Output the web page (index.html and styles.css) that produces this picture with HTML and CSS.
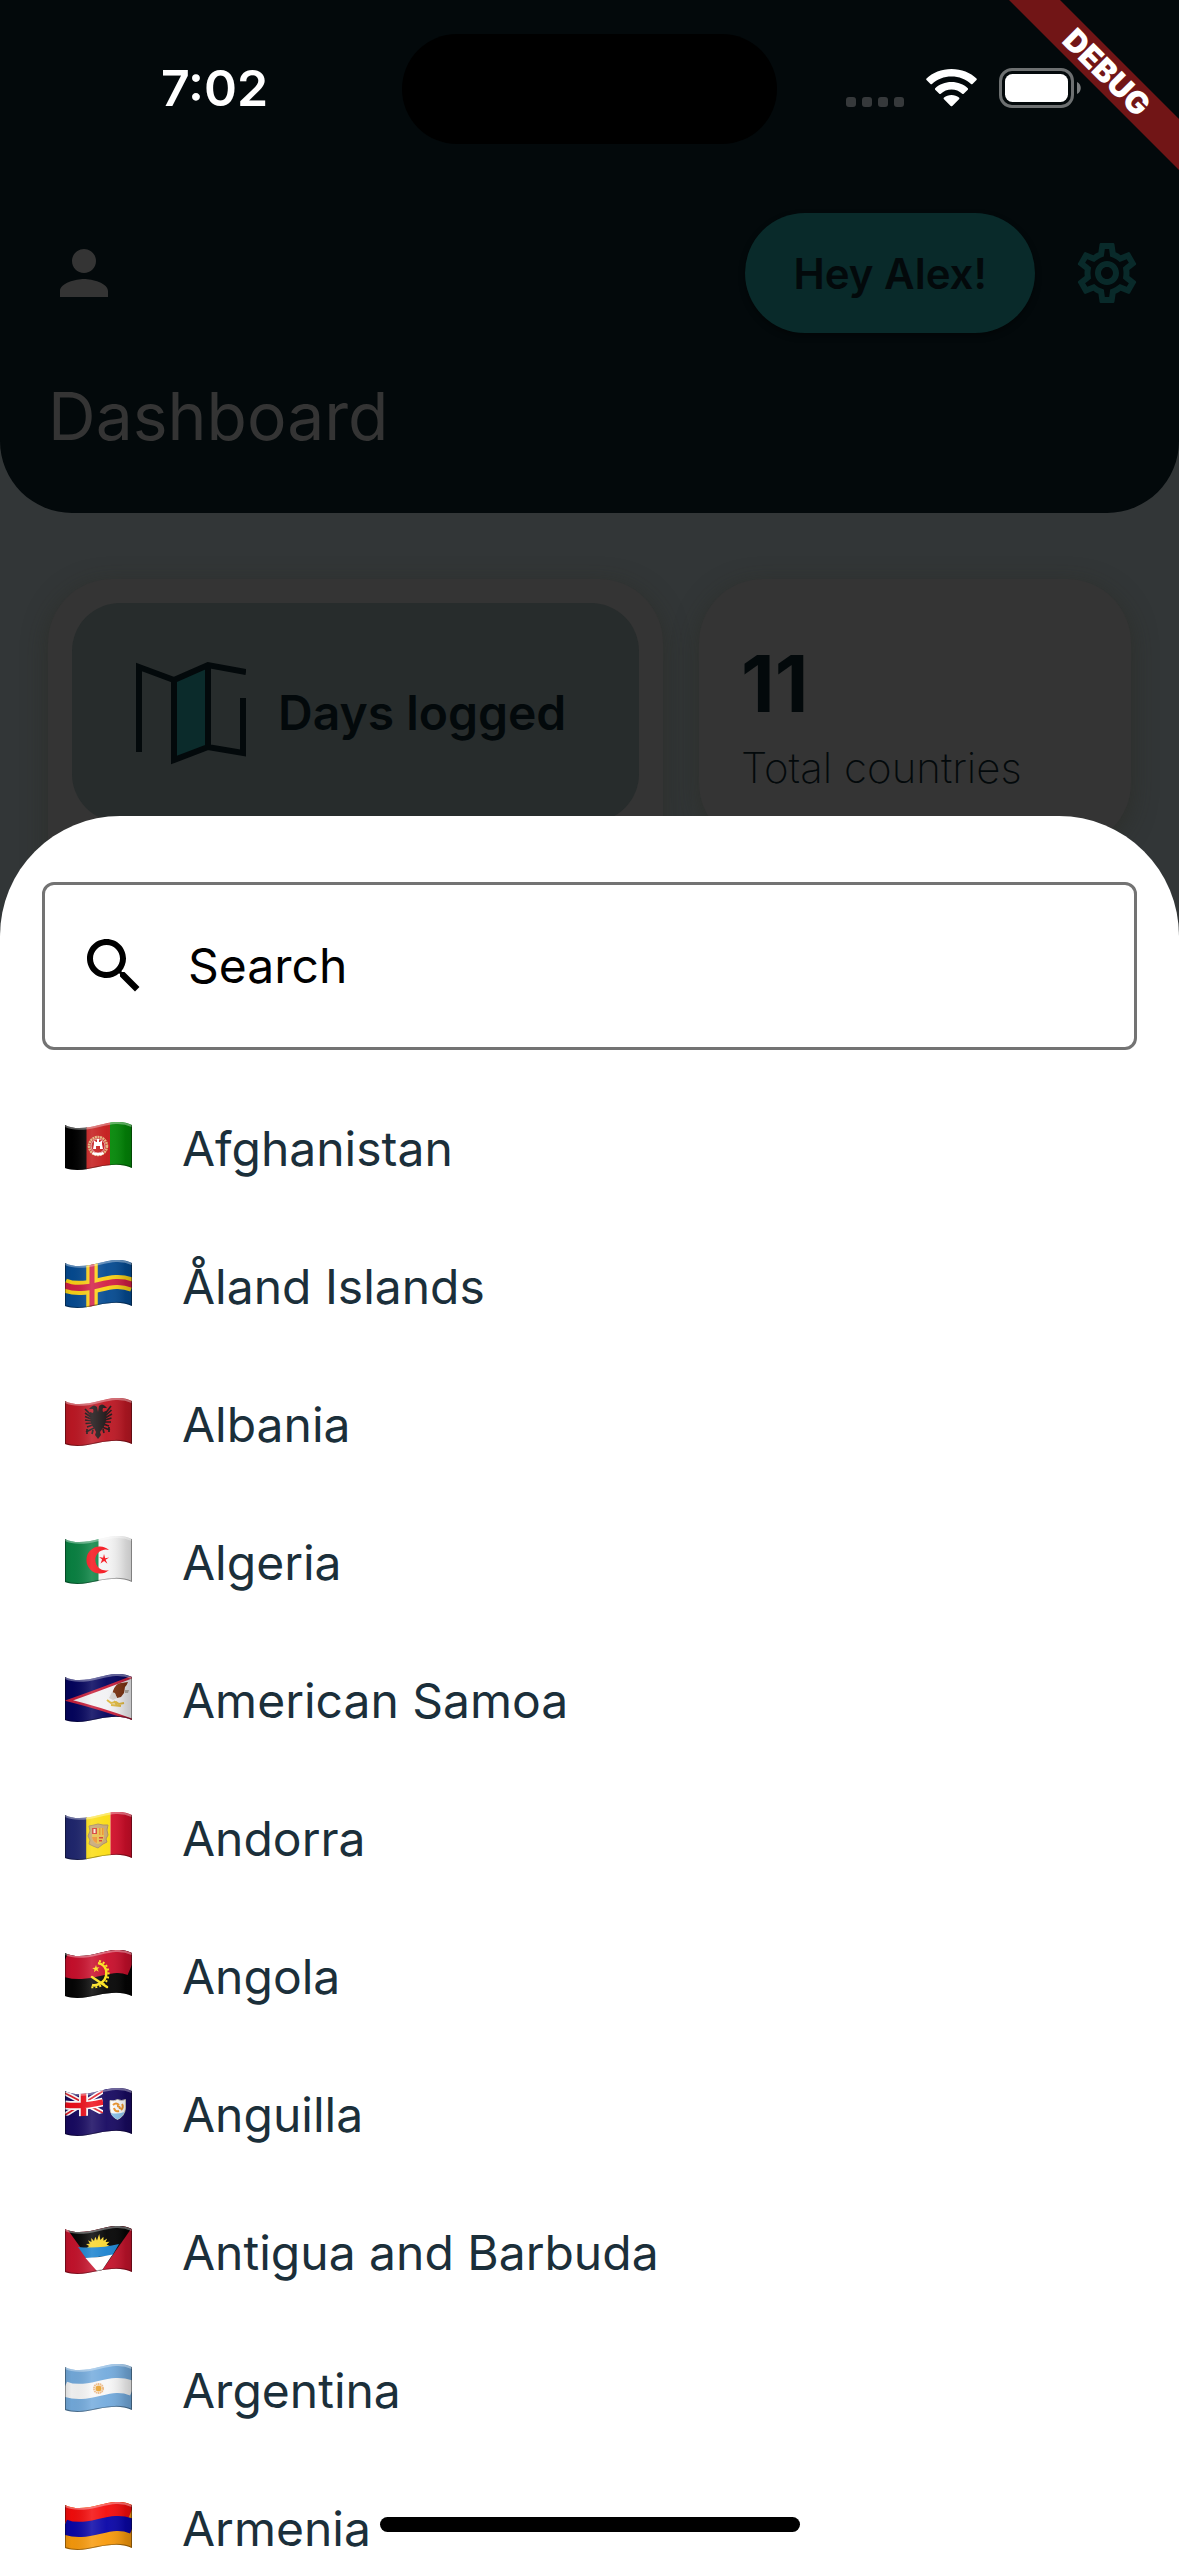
FILE: index.html
```html
<!DOCTYPE html>
<html lang="en">
<head>
<meta charset="utf-8">
<meta name="viewport" content="width=device-width, initial-scale=1">
<title>Dashboard</title>
<link rel="stylesheet" href="styles.css">
</head>
<body>
<svg class="defs" aria-hidden="true">
  <defs>
    <clipPath id="cloth"><path d="M0 3C10 8 22 6 34 3S56-2 67 3V46C56 41 44 43 33 45S12 50 0 46Z"/></clipPath>
    <path id="wave" d="M-1 0C10 5 22 3 34 0S56-5 68 0"/>
    <linearGradient id="fold">
      <stop offset="0" stop-color="#000" stop-opacity=".12"/>
      <stop offset=".1" stop-color="#000" stop-opacity=".04"/>
      <stop offset=".4" stop-color="#fff" stop-opacity=".14"/>
      <stop offset=".62" stop-color="#fff" stop-opacity=".04"/>
      <stop offset=".9" stop-color="#000" stop-opacity=".14"/>
      <stop offset="1" stop-color="#000" stop-opacity=".2"/>
    </linearGradient>
    <g id="shade">
      <rect width="67" height="49" fill="url(#fold)"/>
      <path d="M0 4C10 9 22 7 34 4S56-1 67 4" fill="none" stroke="#fff" stroke-opacity=".35" stroke-width="2"/>
      <path d="M67 3V46C56 41 44 43 33 45S12 50 0 46V3" fill="none" stroke="#000" stroke-opacity=".35" stroke-width="2"/>
    </g>
  </defs>
</svg>

<div class="app">
  <header class="header">
    <div class="status">
      <time class="clock">7:02</time>
      <div class="island"></div>
      <div class="indicators">
        <svg width="58" height="38" viewBox="0 0 58 38" fill="#36393b" aria-hidden="true"><rect y="28" width="10" height="10" rx="3"/><rect x="16" y="28" width="10" height="10" rx="3"/><rect x="32" y="28" width="10" height="10" rx="3"/><rect x="48" y="28" width="10" height="10" rx="3"/></svg>
        <svg width="51" height="38" viewBox="0 0 51 38" aria-hidden="true"><path fill="#fff" d="M25.500 0C35.500 0 44.500 3.700 50.500 9.500Q51.200 10.300 50.500 11L46.500 15Q45.800 15.600 45 15C39.800 10.200 33 7.600 25.500 7.600S11.200 10.200 6 15Q5.200 15.600 4.500 15L.5 11Q-.2 10.300.5 9.500C6.500 3.700 15.500 0 25.500 0ZM25.500 13C31.900 13 37.600 15.300 41.800 19.200Q42.500 20 41.800 20.700L37.700 24.700Q37 25.300 36.200 24.700C33.300 22.200 29.600 20.600 25.500 20.600S17.700 22.200 14.800 24.700Q14 25.300 13.300 24.700L9.200 20.700Q8.500 20 9.200 19.200C13.400 15.300 19.100 13 25.500 13ZM25.500 26C28.400 26 31 26.900 33 28.600Q33.800 29.400 33 30.200L26.300 37Q25.500 37.700 24.700 37L18 30.200Q17.200 29.400 18 28.600C20 26.900 22.600 26 25.500 26Z"/></svg>
        <svg width="82" height="40" viewBox="0 0 82 40" aria-hidden="true"><rect x="1.500" y="1.500" width="72" height="37" rx="11.500" fill="none" stroke="#6d7071" stroke-width="3"/><rect x="6" y="6" width="63" height="28" rx="7.500" fill="#fff"/><path d="M78 14V26C83 24 83 16 78 14Z" fill="#7b7e7f"/></svg>
      </div>
    </div>
    <div class="toolbar">
      <button class="icon-button" aria-label="Profile"><svg viewBox="0 0 24 24"><path fill="#343434" d="M12 12c2.210 0 4-1.790 4-4s-1.790-4-4-4-4 1.790-4 4 1.790 4 4 4zm0 2c-2.670 0-8 1.340-8 4v2h16v-2c0-2.660-5.330-4-8-4z"/></svg></button>
      <button class="greeting">Hey Alex!</button>
      <button class="icon-button" aria-label="Settings"><svg viewBox="0 0 24 24"><path fill="#092a2a" d="M19.430 12.980c.04-.32.070-.64.070-.98 0-.34-.03-.66-.07-.98l2.110-1.650c.19-.15.240-.42.120-.64l-2-3.460c-.09-.16-.26-.25-.44-.25-.06 0-.12.010-.17.030l-2.490 1c-.52-.4-1.080-.73-1.690-.98l-.38-2.650C14.460 2.180 14.250 2 14 2h-4c-.25 0-.46.180-.49.420l-.38 2.650c-.61.250-1.170.590-1.690.980l-2.490-1c-.06-.02-.12-.03-.18-.03-.17 0-.34.090-.43.250l-2 3.460c-.13.220-.07.490.120.640l2.110 1.650c-.04.320-.07.650-.07.980 0 .33.030.66.070.98l-2.110 1.650c-.19.150-.24.420-.12.640l2 3.460c.09.160.26.250.44.250.06 0 .12-.01.170-.03l2.490-1c.52.400 1.080.730 1.690.980l.38 2.650c.03.240.24.420.49.420h4c.25 0 .46-.18.490-.42l.38-2.650c.61-.25 1.170-.59 1.690-.98l2.490 1c.06.020.12.030.18.030.17 0 .34-.09.430-.25l2-3.460c.12-.22.070-.49-.12-.64l-2.110-1.650zm-1.980-1.710c.04.310.05.520.05.730 0 .21-.02.430-.05.730l-.14 1.130.89.700 1.080.840-.7 1.210-1.270-.51-1.040-.42-.9.680c-.43.320-.84.560-1.250.730l-1.060.430-.16 1.130-.2 1.350h-1.400l-.19-1.350-.16-1.130-1.060-.43c-.43-.18-.83-.41-1.230-.71l-.91-.7-1.060.430-1.270.510-.7-1.210 1.080-.84.890-.7-.14-1.130c-.03-.31-.05-.54-.05-.74s.02-.43.050-.73l.14-1.130-.89-.7-1.080-.84.700-1.210 1.270.510 1.040.420.900-.68c.43-.32.840-.56 1.250-.73l1.060-.43.160-1.130.2-1.350h1.390l.19 1.350.16 1.130 1.060.430c.43.180.83.410 1.230.710l.91.700 1.060-.43 1.270-.51.700 1.210-1.070.85-.89.700.14 1.130zM12 8c-2.210 0-4 1.790-4 4s1.790 4 4 4 4-1.790 4-4-1.790-4-4-4zm0 6c-1.100 0-2-.9-2-2s.9-2 2-2 2 .9 2 2-.9 2-2 2z"/></svg></button>
    </div>
    <h1 class="title">Dashboard</h1>
  </header>

  <main class="cards">
    <section class="card card-days">
      <div class="days">
        <svg width="110" height="106" viewBox="0 0 110 106" aria-hidden="true"><path fill="#0b2b2b" d="M38 20 72 5V86L38 100Z"/><path fill="none" stroke="#03090b" stroke-width="6" d="M3 92V7L38 20 72 5 110 12M38 20V100L72 87 107 93V38M72 5V87"/></svg>
        <span>Days logged</span>
      </div>
    </section>
    <section class="card card-total">
      <strong class="total">11</strong>
      <span class="total-label">Total countries</span>
    </section>
  </main>
</div>

<div class="ribbon"><span>DEBUG</span></div>

<div class="sheet" role="dialog" aria-label="Choose a country">
  <label class="search">
    <svg viewBox="0 0 24 24" aria-hidden="true"><path d="M15.500 14h-.79l-.28-.27C15.410 12.590 16 11.110 16 9.500 16 5.910 13.090 3 9.500 3S3 5.910 3 9.500 5.910 16 9.500 16c1.610 0 3.090-.59 4.230-1.570l.27.280v.79l5 4.990L20.490 19l-4.990-5zm-6 0C7.010 14 5 11.990 5 9.500S7.010 5 9.500 5 14 7.010 14 9.500 11.990 14 9.500 14z"/></svg>
    <input type="text" placeholder="Search" aria-label="Search">
  </label>
  <ul class="countries">
    <li><button class="country">
      <svg class="flag" viewBox="0 0 67 49"><g clip-path="url(#cloth)"><path fill="#000" d="M0 0H22V49H0z"/><path fill="#c41a1a" d="M21.500 0H45V49H21.500z"/><path fill="#048a08" d="M45 0H67V49H45z"/><circle cx="33" cy="24" r="9" fill="none" stroke="#e3b27a" stroke-width="2.500" stroke-dasharray="2 .6"/><circle cx="33" cy="24" r="7" fill="none" stroke="#fff" stroke-opacity=".6"/><path fill="#fff" d="M29 22V19h1.500v1H32v-3h2v3h1.500v-1H37v3l1 5H28zM27 32q6 3 12 0l-1-2q-5 2-10 0z"/><path fill="#c41a1a" d="M31 24h4v3h-4z"/><use href="#shade"/></g></svg>
      <span>Afghanistan</span></button></li>
    <li><button class="country">
      <svg class="flag" viewBox="0 0 67 49"><g clip-path="url(#cloth)"><path fill="#054b92" d="M0 0H67V49H0z"/><g fill="none"><use href="#wave" y="25" stroke="#fbd116" stroke-width="14"/><path stroke="#fbd116" stroke-width="11.500" d="M27 0V49"/><use href="#wave" y="25" stroke="#d21f45" stroke-width="6"/><path stroke="#d21f45" stroke-width="5" d="M27 0V49"/></g><use href="#shade"/></g></svg>
      <span>Åland Islands</span></button></li>
    <li><button class="country">
      <svg class="flag" viewBox="0 0 67 49"><g clip-path="url(#cloth)"><path fill="#be1824" d="M0 0H67V49H0z"/><path fill="#1d1516" d="M33 14 32 9Q29 6 26 9L24 11 28 11Q29 13 28 15L25 14Q25 27 29 30L31 34 30 37 33 41 36 37 35 34 38 30Q42 26 41 13L38 14Q37 12 38 10L42 10 40 8Q37 5 34 8Z"/><path fill="none" stroke="#1d1516" stroke-width="1.700" d="M26 17 20 11M26 19 20 15M26 21 20 18.500M27 23 20 22M27 25 20.500 25.500M28 27 22 29M40 16 46 8M40 18 46.500 12M40 20 47 16M40 22 46.500 20M39 24 46 24M38 26 44 28M29 30 21 34M22 31V36M37 29 45 32M44 29V34M28 32 27 36M38 31 39 35"/><use href="#shade"/></g></svg>
      <span>Albania</span></button></li>
    <li><button class="country">
      <svg class="flag" viewBox="0 0 67 49"><g clip-path="url(#cloth)"><path fill="#0a8343" d="M0 0H34V49H0z"/><path fill="#f4f4f4" d="M33.500 0H67V49H33.500z"/><path fill="#f5141c" d="M44 14A13.500 13.500 0 1 0 44 34 10.500 10.500 0 1 1 44 14Z"/><path fill="#f5141c" d="M39 18l1.200 4.200 4-.7-3.600 2.300 1.800 4-3.300-2.700-3.600 2.500 1.600-4-3-2.500 4 .6z"/><use href="#shade"/></g></svg>
      <span>Algeria</span></button></li>
    <li><button class="country">
      <svg class="flag" viewBox="0 0 67 49"><g clip-path="url(#cloth)"><path fill="#04045e" d="M0 0H67V49H0z"/><path fill="#f2f2f4" stroke="#c8203c" stroke-width="2.500" d="M4 26.500Q34 16 70 2V47Q38 35 4 26.500Z"/><path fill="#7b3210" d="M48 17q3-8 8-8l7-1q-1 3-3 5l-1 6-3 4-4 1-2-4-3 2z"/><path fill="#b9b2a8" d="M60 16h4l-1 3h-3z"/><path fill="#d9d5d2" d="M47 18l3 1 2 5-4 2-4-2z"/><path fill="none" stroke="#e0b93f" stroke-width="2" d="M42 26l4 3 5-1 3 2 5-1M46 31l10 1M49 27l3 4"/><use href="#shade"/></g></svg>
      <span>American Samoa</span></button></li>
    <li><button class="country">
      <svg class="flag" viewBox="0 0 67 49"><g clip-path="url(#cloth)"><path fill="#20276f" d="M0 0H22V49H0z"/><path fill="#fbdd12" d="M21.200 0H45.500V49H21.200z"/><path fill="#d50f2b" d="M45.500 0H67V49H45.500z"/><path fill="#c6a572" stroke="#a88d5d" d="M24 14l5-1 4-1 5 1 5 0-1 5 1 5-2 4 1 3-4 2-5 4-5-2-4-2 1-4-2-4 2-5z"/><path fill="#e8bf4a" d="M27 16h12v9q-1 6-6 7-5-1-6-7z"/><path fill="#d33b2f" d="M27 16h5v6h-5zM34 25h4v1.500h-4zM34 28h3v1.500h-3z"/><path fill="#f7e9d9" d="M28.500 17h2v4h-2z"/><path fill="#ec8f2e" d="M34 16h1.500v7H34zM37 16h1.500v7H37zM27 25h5v6q-4-1-5-6z"/><use href="#shade"/></g></svg>
      <span>Andorra</span></button></li>
    <li><button class="country">
      <svg class="flag" viewBox="0 0 67 49"><g clip-path="url(#cloth)"><path fill="#050505" d="M0 0H67V49H0z"/><use href="#wave" y="12" fill="none" stroke="#c90f2c" stroke-width="28"/><path fill="none" stroke="#fbe11b" stroke-width="2.600" d="M33 13C44 15 44 30 34 34Q30 36 27 35"/><path fill="none" stroke="#fbe11b" stroke-width="2" stroke-dasharray="2 2" d="M34 11C46 13 47 32 35 36Q30 38 25 37"/><path stroke="#fbe11b" stroke-width="2.500" stroke-linecap="round" d="M27 27 42 37"/><path fill="#fbe11b" d="M31 15l.8 2.600 2.700-.3-2 1.800 1.200 2.600-2.500-1.400-2.200 1.900.5-2.800-2.400-1.300 2.800-.4z"/><use href="#shade"/></g></svg>
      <span>Angola</span></button></li>
    <li><button class="country">
      <svg class="flag" viewBox="0 0 67 49"><g clip-path="url(#cloth)"><path fill="#180a62" d="M0 0H67V49H0z"/><g fill="none"><path stroke="#fff" stroke-width="5" d="M0 5 38 25M0 27 38 3"/><path stroke="#e0202a" stroke-width="1.800" d="M0 5 38 25M0 27 38 3"/><path stroke="#fff" stroke-width="9" d="M18.500 0V29"/><path stroke="#fff" stroke-width="9" d="M0 17Q18 19 38 14"/><path stroke="#ee0f1c" stroke-width="5.500" d="M18.500 0V29M0 17Q18 19 38 14"/></g><path fill="#180a62" d="M0 27.500Q20 30 38 25V35H0zM38 0h4v30h-4z"/><path fill="#fff" stroke="#d9d3b8" stroke-width=".8" d="M45 12.500q4 1 7.500-1 4 2 8 0v9q-1 8-8 11-7-3-7.500-11z"/><path fill="#8cc4ee" d="M46 25q6 1.500 13.500-1-2 5-7 7.500-5-2-6.500-6.500z"/><path fill="none" stroke="#f0962a" stroke-width="2" d="M48 17q3-3 6 0M57 16q2 3-1 6M49 20q1 4 5 3M52 18q3 0 3 3"/><use href="#shade"/></g></svg>
      <span>Anguilla</span></button></li>
    <li><button class="country">
      <svg class="flag" viewBox="0 0 67 49"><g clip-path="url(#cloth)"><path fill="#c5132c" d="M0 0H67V49H0z"/><path fill="#050505" d="M0 0H68L34.500 48Z"/><path fill="#f9d62e" d="M22 22l2-2-3-2 3.800-.3-1.800-3.400 3.500 1.600-.3-4 2.800 3 1.300-4.200 1.700 3.700 2.200-6.400 1.200 6 3-3.300.1 4 3.700-2.100-1.600 3.500 4-.3-3 2.700 3 1.500L34 24z"/><path fill="#1b83cf" d="M13 21Q34 23 54 18L47 30Q34 30 21.500 33z"/><path fill="#fff" d="M20.500 32Q34 32 47.500 28.500L34.500 48z"/><use href="#shade"/></g></svg>
      <span>Antigua and Barbuda</span></button></li>
    <li><button class="country">
      <svg class="flag" viewBox="0 0 67 49"><g clip-path="url(#cloth)"><path fill="#74abdd" d="M0 0H67V49H0z"/><use href="#wave" y="24.500" fill="none" stroke="#f7f7f7" stroke-width="15"/><circle cx="33.500" cy="24.500" r="4.500" fill="none" stroke="#ebb681" stroke-width="2" stroke-dasharray="1.500 .5"/><circle cx="33.500" cy="24.500" r="3" fill="#e8a02c"/><use href="#shade"/></g></svg>
      <span>Argentina</span></button></li>
    <li><button class="country">
      <svg class="flag" viewBox="0 0 67 49"><g clip-path="url(#cloth)"><path fill="#f89a0c" d="M0 0H67V49H0z"/><use href="#wave" y="5" fill="none" stroke="#f50c0c" stroke-width="28"/><use href="#wave" y="24.500" fill="none" stroke="#0a06a8" stroke-width="15"/><use href="#shade"/></g></svg>
      <span>Armenia</span></button></li>
  </ul>
</div>
<div class="home-indicator"></div>
</body>
</html>
```
FILE: styles.css
```css
:root {
  --ink: #03090b;
  --header: #03090b;
  --card: #343434;
  --teal: #092a2a;
  --country: #1b2f3a;
}

* {
  box-sizing: border-box;
}

html,
body {
  height: 100%;
  margin: 0;
}

body {
  position: relative;
  overflow: hidden;
  background: #323637;
  color: var(--ink);
  font-family: Inter, "Liberation Sans", sans-serif;
}

button {
  margin: 0;
  padding: 0;
  border: 0;
  background: none;
  color: inherit;
  font: inherit;
}

svg {
  display: block;
  flex: none;
}

.defs {
  position: absolute;
  width: 0;
  height: 0;
}

/* Header */

.header {
  padding: 34px 0 55px;
  border-radius: 0 0 72px 72px;
  background: var(--header);
}

.status {
  display: grid;
  grid-template-columns: 1fr 375px 1fr;
  align-items: center;
}

.clock {
  padding: 0 0 3px 27px;
  color: #fff;
  font-size: 50px;
  font-weight: 600;
  line-height: 60px;
  text-align: center;
}

.island {
  height: 110px;
  border-radius: 55px;
  background: #000;
}

.indicators {
  display: flex;
  align-items: center;
  justify-content: center;
  gap: 22px;
  padding: 0 30px 3px 0;
}

.toolbar {
  display: flex;
  align-items: center;
  gap: 36px;
  margin-top: 69px;
  padding: 0 36px 0 48px;
}

.icon-button {
  width: 72px;
  height: 72px;
}

.greeting {
  height: 120px;
  margin-left: auto;
  padding: 0 48px;
  border-radius: 60px;
  background: var(--teal);
  box-shadow: 0 3px 6px rgba(0, 0, 0, 0.4);
  font-size: 42px;
  font-weight: 600;
}

.title {
  margin: 41px 48px 0;
  color: #343434;
  font-size: 66px;
  font-weight: 400;
  line-height: 84px;
}

/* Cards */

.cards {
  display: grid;
  grid-template-columns: 615fr 432fr;
  align-items: start;
  gap: 36px;
  padding: 66px 48px 0;
}

.card {
  border-radius: 64px;
  background: var(--card);
  box-shadow: 0 6px 24px rgba(40, 40, 30, 0.5);
}

.card-days {
  min-height: 420px;
  padding: 24px;
}

.days {
  display: flex;
  align-items: center;
  gap: 32px;
  height: 219px;
  padding: 0 48px 0 64px;
  border-radius: 48px;
  background: #272c2c;
  font-size: 48px;
  font-weight: 600;
}

.card-total {
  display: flex;
  flex-direction: column;
  gap: 10px;
  padding: 59px 42px 51px;
}

.total {
  font-size: 78px;
  font-weight: 700;
  line-height: 92px;
}

.total-label {
  font-size: 42px;
  font-weight: 200;
  line-height: 56px;
}

/* Debug ribbon across the top right corner */

.ribbon {
  position: absolute;
  top: 0;
  right: 0;
  display: flex;
  align-items: center;
  justify-content: center;
  width: 170px;
  height: 170px;
  background: #711516;
  clip-path: polygon(0 0, 51px 0, 100% 119px, 100% 100%);
}

.ribbon span {
  color: #fff;
  font-size: 31px;
  font-weight: 900;
  line-height: 36px;
  transform: rotate(45deg) translateY(-18px);
}

/* Country picker */

.sheet {
  position: absolute;
  inset: 816px 0 0;
  display: flex;
  flex-direction: column;
  gap: 30px;
  padding: 66px 42px 0;
  border-radius: 120px 120px 0 0;
  background: #fff;
}

.search {
  display: flex;
  flex: none;
  align-items: center;
  gap: 38px;
  height: 168px;
  padding: 0 33px;
  border: 3px solid #737373;
  border-radius: 12px;
}

.search svg {
  width: 72px;
  height: 72px;
}

.search input {
  flex: 1;
  min-width: 0;
  padding: 0;
  border: 0;
  outline: 0;
  background: none;
  color: #000;
  font: 400 48px/60px Inter, "Liberation Sans", sans-serif;
}

.search input::placeholder {
  color: #000;
  opacity: 1;
}

.countries {
  flex: 1;
  min-height: 0;
  margin: 0;
  padding: 0;
  overflow-y: auto;
  list-style: none;
  scrollbar-width: none;
}

.country {
  display: flex;
  align-items: center;
  gap: 50px;
  width: 100%;
  height: 138px;
  padding-left: 23px;
  color: var(--country);
  font-size: 48px;
  line-height: 60px;
  text-align: left;
}

.flag {
  width: 67px;
  height: 49px;
  margin-bottom: 6px;
}

.home-indicator {
  position: absolute;
  bottom: 24px;
  left: 50%;
  width: 420px;
  height: 15px;
  border-radius: 8px;
  background: #000;
  transform: translateX(-50%);
}
```
